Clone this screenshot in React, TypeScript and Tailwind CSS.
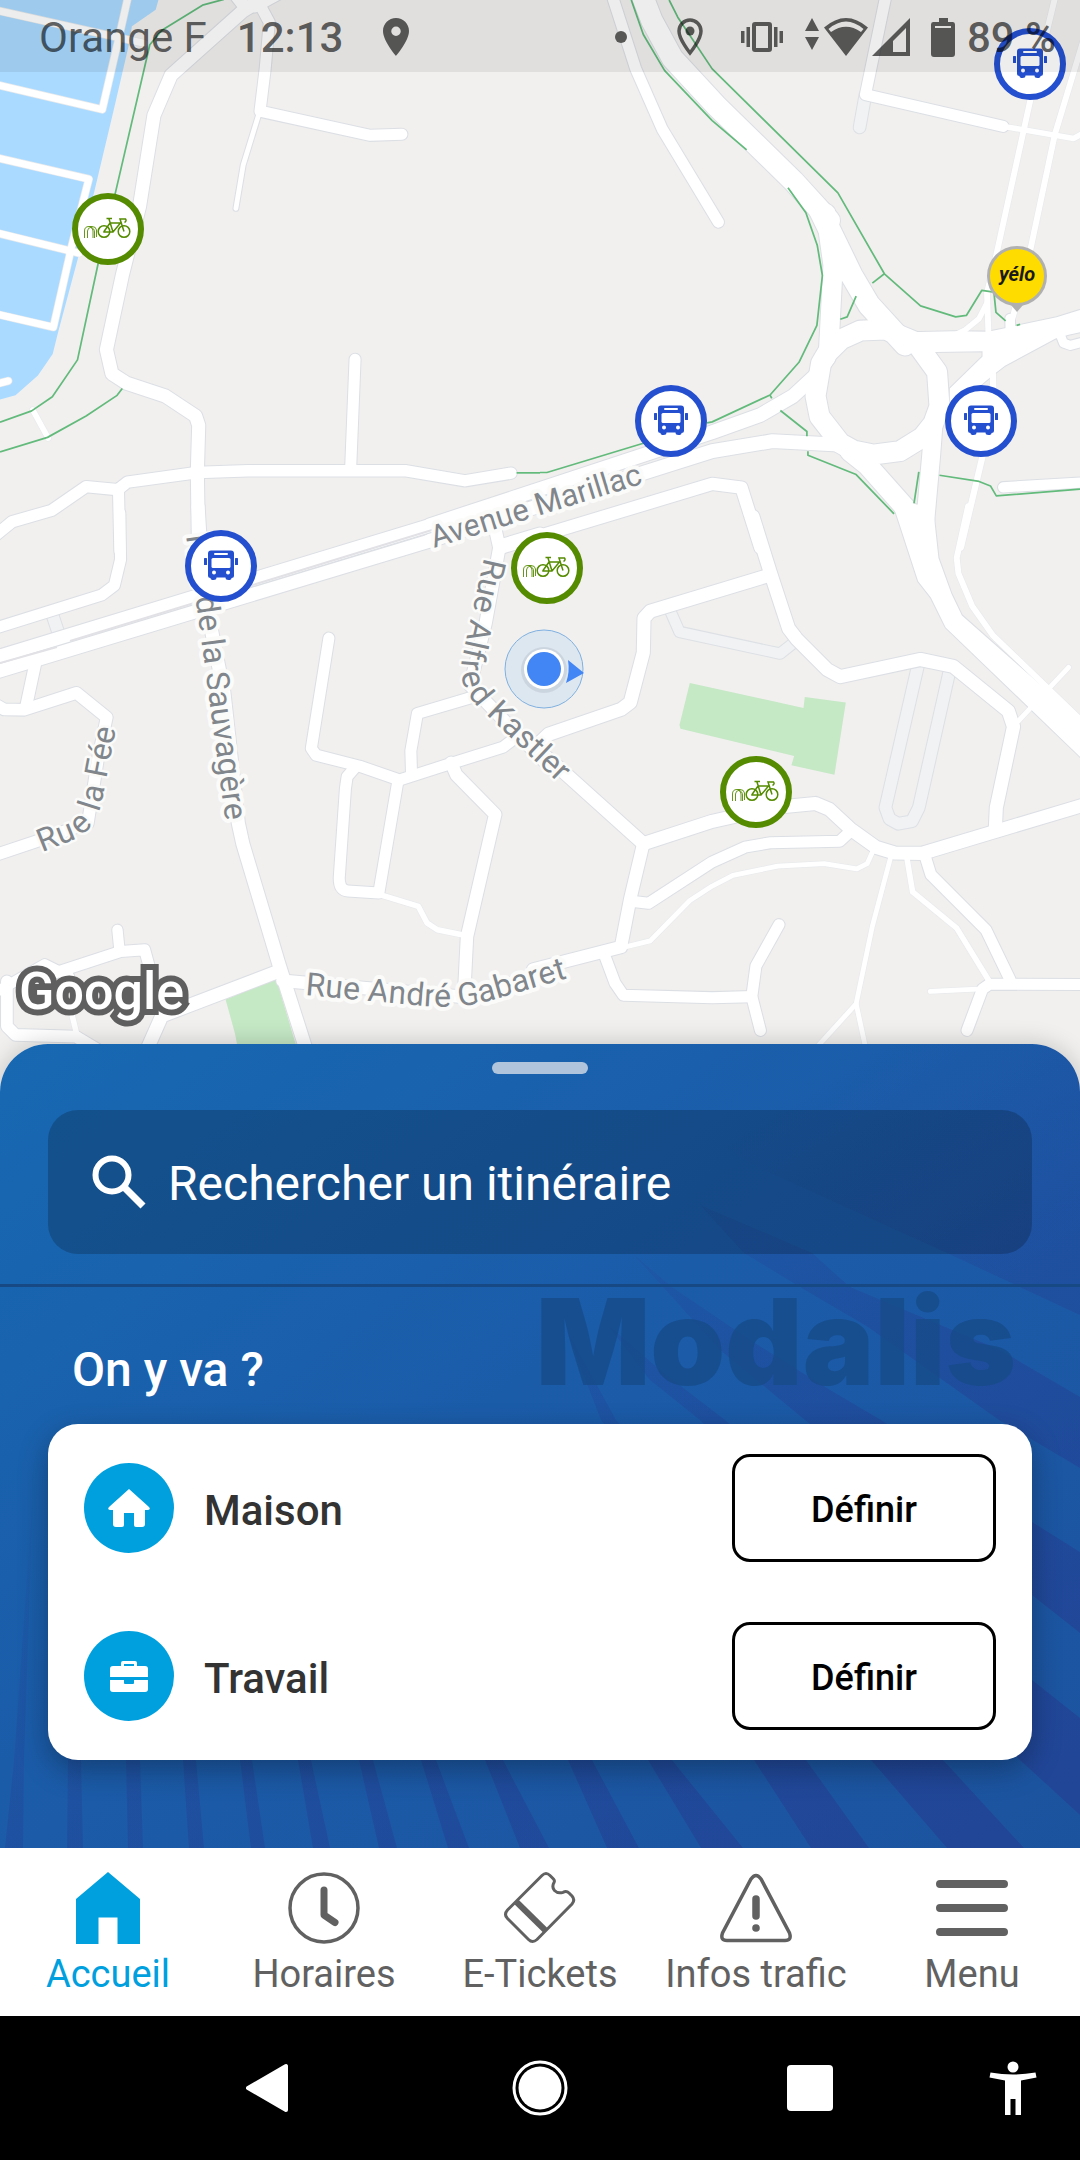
import type { ReactNode } from "react";

type Road = { d: string; w: number };
type Tile = {
  x: number;
  y: number;
  water?: string;
  parks: string[];
  piers: Road[];
  lanes: Road[];
  roads: Road[];
  shapes: string[];
  cycle: string[];
};

/* Each tile covers 540 map units and is described on a 1568-unit grid. */
const TILE_SCALE = 540 / 1568;
const MAP_WIDTH = 1080;
const MAP_HEIGHT = 1092;

const tiles: Tile[] = [
  {
    x: 0,
    y: 0,
    water: "M0 0H460L452 28L383 76L373 135L330 320L273 560L225 755L170 960L153 1028L110 1090L45 1148L0 1160Z",
    parks: [],
    piers: [
      { d: "M-10 30L420 126", w: 20 },
      { d: "M372 -10L345 110L297 318L-10 246", w: 20 },
      { d: "M-10 458L258 520L203 735", w: 20 },
      { d: "M-10 676L230 735", w: 20 },
      { d: "M206 725L155 950L-10 912", w: 20 },
      { d: "M-10 1115L24 1106", w: 20 },
      { d: "M95 1190L140 1272", w: 16 },
    ],
    lanes: [],
    roads: [
      { d: "M752 330L706 480L685 605", w: 14 },
      { d: "M680 -20L715 25", w: 36 },
      { d: "M810 -20L740 18", w: 36 },
      { d: "M750 5L782 65L770 200L755 323L1075 393L1167 390", w: 32 },
      { d: "M745 8L705 32L497 218L447 335L405 600L355 800L309 1015L325 1085L368 1113L480 1150L568 1208L577 1235L573 1370L576 1568", w: 38 },
      { d: "M1031 1043L1018 1365", w: 32 },
      { d: "M1484 1374L1350 1396L1180 1367L720 1367L573 1372L370 1400L342 1422L250 1413L150 1482L35 1515L-20 1560", w: 33 },
      { d: "M344 1422L348 1600", w: 32 },
    ],
    shapes: [],
    cycle: [
      "M650 -2L588 15L470 88L435 130L335 560L285 765L225 1045L152 1152L92 1193L0 1226",
      "M0 1312L138 1270L250 1208L340 1148L355 1128",
      "M1500 1373H1568",
    ],
  },
  {
    x: 540,
    y: 0,
    parks: [],
    piers: [
      { d: "M1345 367L1550 402L1580 385", w: 16 },
      { d: "M1495 -5L1425 285L1325 740L1298 850L1302 965", w: 17 },
      { d: "M1298 880L1275 925L1235 958L1200 975", w: 16 },
      { d: "M1580 110L1495 390L1425 720L1368 940", w: 17 },
      { d: "M1315 1085L1316 1130L1285 1325L1222 1590", w: 18 },
    ],
    lanes: [{ d: "M945 275L928 370", w: 34 }],
    roads: [
      { d: "M212 -5L278 200L355 375L518 645", w: 32 },
      { d: "M1005 -15L945 275L1345 367", w: 32 },
      { d: "M1345 1415L1590 1400", w: 30 },
      { d: "M290 -30L325 60L385 170L510 305L735 525L840 640", w: 62 },
      { d: "M815 615L905 800L955 885L1060 1000", w: 64 },
      { d: "M830 620L851 770L838 1020", w: 56 },
      { d: "M838 1040L800 1090L735 1150L640 1205L500 1255L0 1420L-320 1525", w: 40 },
      { d: "M880 1292L675 1281L500 1310L0 1468L-320 1570", w: 40 },
      { d: "M-110 1589L-20 1562L500 1405L585 1416L640 1590", w: 36 },
      { d: "M930 960L1003 957L1090 993L1153 1080L1160 1180L1142 1230L1110 1270L1045 1310L967 1320L910 1308L872 1287L812 1210L800 1150L816 1055L834 1025L875 985Z", w: 58 },
      { d: "M900 1310L950 1350L1070 1485", w: 58 },
      { d: "M1142 1240L1136 1320L1118 1520", w: 52 },
      { d: "M1365 925L1366 965", w: 28 },
      { d: "M1512 975L1520 996L1540 1003L1580 992", w: 26 },
    ],
    shapes: [
      "M1070 965L1200 962L1300 963L1350 953L1500 921L1590 893V960L1535 972L1497 983L1350 1062L1320 1085L1230 1160L1190 1200V1128L1285 1035V1020L1148 1022L1080 1020Z",
    ],
    cycle: [
      "M265 0L300 100L362 205L500 350L600 435",
      "M720 545L772 618L805 712L820 800L804 945L752 1052L668 1147L500 1225L485 1228",
      "M375 0L400 50L500 200L865 560L1000 795L1105 888L1207 920L1238 916L1283 843L1318 848L1324 907L1352 932",
      "M1000 795L965 822",
      "M918 860L892 920L872 927",
      "M668 1147L673 1157",
      "M698 1192L775 1253V1267",
      "M778 1310V1322L918 1378L1028 1492",
      "M1100 1370L1086 1462",
      "M1160 1380L1275 1398L1308 1411L1325 1440L1568 1420",
      "M300 1287L20 1372H0",
      "M1384 945L1394 942",
    ],
  },
  {
    x: 0,
    y: 520,
    parks: ["M655 1392L802 1332L885 1610H706L682 1490Z"],
    piers: [
      { d: "M1110 1090L1215 1122L1240 1170L1270 1190L1345 1205", w: 16 },
      { d: "M205 1420L222 1490", w: 16 },
    ],
    lanes: [{ d: "M152 275L172 335", w: 34 }],
    roads: [
      { d: "M348 -20L350 115L332 190L295 218L-10 313", w: 32 },
      { d: "M-20 401L1250 15", w: 38 },
      { d: "M-20 444L1250 60", w: 38 },
      { d: "M105 405L75 545", w: 34 },
      { d: "M-20 532L12 550L70 551L222 502L310 573L285 690L255 880L100 935L-20 975", w: 34 },
      { d: "M575 -40L590 200L650 500L692 880L705 940L810 1290L915 1620", w: 38 },
      { d: "M820 1338L900 1345L1350 1385L1600 1310", w: 36 },
      { d: "M955 343L904 663L918 683L1045 715L1160 755L1300 710L1460 660L1500 630", w: 32 },
      { d: "M1195 740L1193 670L1212 562L1370 515", w: 32 },
      { d: "M1030 720L1008 745L1003 780L985 1040Q985 1075 1010 1077L1100 1083L1155 760", w: 32 },
      { d: "M1310 705L1325 740L1438 855L1356 1210L1348 1370", w: 36 },
      { d: "M1430 -10L1450 80L1410 300L1365 480L1500 620L1590 710", w: 36 },
      { d: "M1450 75L1568 40", w: 36 },
      { d: "M341 1190L347 1250", w: 30 },
      { d: "M150 1318L350 1253L420 1248L445 1340L490 1430", w: 32 },
      { d: "M-10 1370L130 1290L200 1325", w: 30 },
      { d: "M20 1340V1470L45 1495L220 1500L320 1560", w: 34 },
      { d: "M390 1620L470 1440L810 1310", w: 38 },
    ],
    shapes: [],
    cycle: [],
  },
  {
    x: 540,
    y: 520,
    parks: ["M435 473L765 546L769 514L888 530L855 740L730 712L738 685L408 606L405 595Z"],
    piers: [
      { d: "M245 1240L320 1222L435 1105L500 1063L560 1032L690 1005L825 998L920 1013L950 998L965 965", w: 14 },
      { d: "M1018 980L965 1180L918 1405L750 1590", w: 14 },
      { d: "M918 1405L960 1600", w: 14 },
      { d: "M1066 985L1082 1080L1210 1185L1305 1340", w: 16 },
      { d: "M1300 1361L1133 1369", w: 14 },
      { d: "M1243 -40L1210 110L1215 155L1255 250L1315 335L1590 600", w: 17 },
      { d: "M1535 428L1388 585", w: 14 },
    ],
    lanes: [
      { d: "M380 268L405 325L697 388L735 358", w: 30 },
      { d: "M1097 425L1003 835L1015 868L1040 882L1080 875L1100 835L1190 435", w: 34 },
    ],
    roads: [
      { d: "M618 -10L668 150L722 315L745 345L835 435L872 455L1105 405L1200 425L1360 555L1375 600L1325 835L1322 900", w: 38 },
      { d: "M668 160L320 265L302 285L300 385L262 530L235 550L25 622L-20 665", w: 38 },
      { d: "M-40 640L50 715L300 940L500 875L680 835L800 823L840 840L905 900L975 950L1030 967L1110 968L1590 824", w: 38 },
      { d: "M300 940L262 1100L235 1240L-20 1305", w: 36 },
      { d: "M265 1107L315 1113L500 993L595 950L670 937L870 933L900 905", w: 32 },
      { d: "M188 1265L218 1345L242 1380L500 1387L615 1384", w: 32 },
      { d: "M694 1175L627 1295L615 1384L640 1482", w: 32 },
      { d: "M1118 975L1135 1030L1295 1190L1365 1335", w: 32 },
      { d: "M1590 1349L1305 1348L1285 1362L1240 1482", w: 32 },
    ],
    shapes: [
      "M1025 -45L1040 0L1098 178L1135 225L1178 312L1600 718V608L1225 277L1195 215L1157 110L1145 0L1140 -45Z",
    ],
    cycle: [],
  },
];

function TileLayer({ render }: { render: (tile: Tile) => ReactNode }) {
  return (
    <>
      {tiles.map((tile) => (
        <g key={`${tile.x}-${tile.y}`} transform={`translate(${tile.x} ${tile.y}) scale(${TILE_SCALE})`}>
          {render(tile)}
        </g>
      ))}
    </>
  );
}

function strokes(list: Road[], color: string, extra: number) {
  return list.map((r) => (
    <path key={r.d} d={r.d} fill="none" stroke={color} strokeWidth={r.w + extra} strokeLinecap="round" strokeLinejoin="round" />
  ));
}

type Street = { id: string; name: string; d: string; size: number; centered?: boolean };
const streets: Street[] = [
  { id: "marillac", name: "Avenue Marillac", d: "M434 548L700 466", size: 31 },
  { id: "gabaret", name: "Rue André Gabaret", d: "M305 995L425 1006Q462 1009 492 1000L660 951", size: 32 },
  { id: "kastler", name: "Rue Alfred Kastler", d: "M495 560L474 655Q467 681 486 699L650 855", size: 32, centered: true },
  { id: "sauvagere", name: "Rue de la Sauvagère", d: "M186 536L198 615L236 900", size: 32 },
  { id: "fee", name: "Rue la Fée", d: "M38 842L68 830Q86 823 91 800L118 660", size: 32, centered: true },
];

function MapDrawing() {
  return (
    <svg viewBox="0 0 1080 1092" className="block w-full" aria-hidden="true">
      <rect width="1080" height="1092" fill="#f1f0ef" />
      <TileLayer
        render={(t) => (
          <>
            {t.water && <path d={t.water} fill="#aadaff" />}
            {t.parks.map((d) => (
              <path key={d} d={d} fill="#c5e8c5" />
            ))}
            {strokes(t.lanes, "#dde0e4", 6)}
            {strokes(t.lanes, "#f0f2f4", 0)}
            {strokes(t.piers, "#e9eaec", 4)}
            {strokes(t.roads, "#dcdfe4", 6)}
            {t.shapes.map((d) => (
              <path key={d} d={d} fill="none" stroke="#dcdfe4" strokeWidth="6" />
            ))}
          </>
        )}
      />
      <TileLayer
        render={(t) => (
          <>
            {strokes(t.piers, "#ffffff", 0)}
            {strokes(t.roads, "#ffffff", 0)}
            {t.shapes.map((d) => (
              <path key={d} d={d} fill="#ffffff" />
            ))}
            {t.cycle.map((d) => (
              <path key={d} d={d} fill="none" stroke="#62ba7b" strokeWidth="5" strokeLinejoin="round" />
            ))}
          </>
        )}
      />
      <path d="M0 663L57 647M70 641L432 530" stroke="#e2e2e6" strokeWidth="2" fill="none" />
      {streets.map((s) => (
        <g key={s.id}>
          <path id={s.id} d={s.d} fill="none" />
          <text
            fontFamily="Roboto, sans-serif"
            fontSize={s.size}
            fill="#80868b"
            stroke="#fbfbfa"
            strokeWidth={s.centered ? 5 : 8}
            strokeLinejoin="round"
            paintOrder="stroke"
            dominantBaseline={s.centered ? "central" : undefined}
          >
            <textPath href={`#${s.id}`}>{s.name}</textPath>
          </text>
        </g>
      ))}
      <text
        x="19"
        y="1009"
        fontFamily="Roboto, sans-serif"
        fontWeight="500"
        fontSize="52"
        fill="#ffffff"
        stroke="#5f5f5f"
        strokeWidth="12"
        paintOrder="stroke"
      >
        Google
      </text>
      <circle cx="544" cy="669" r="39" fill="#dde7f0" stroke="#7fb0e0" strokeWidth="1" />
      <circle cx="544" cy="670" r="23" fill="#c3cdd8" opacity="0.7" />
      <circle cx="544" cy="669" r="20" fill="#ffffff" />
      <circle cx="544" cy="669" r="17" fill="#4285f4" />
      <path d="M568 660L584 673L566 683Q570 672 568 660Z" fill="#4285f4" />
    </svg>
  );
}

function BusIcon() {
  return (
    <svg viewBox="-30 -30 60 60" className="size-full" aria-hidden="true">
      <path d="M-10 -15.5H10Q13 -15.5 13 -12.5V10Q13 12 10.5 12Q10.5 14 7.5 14Q4.5 14 4.5 11.5H-4.5Q-4.5 14 -7.5 14Q-10.5 14 -10.5 12Q-13 12 -13 10V-12.5Q-13 -15.5 -10 -15.5Z" fill="#244fcf" />
      <rect x="-7" y="-13" width="14" height="2" rx="1" fill="#ffffff" />
      <rect x="-9.5" y="-8" width="19" height="10" rx="1.5" fill="#ffffff" />
      <circle cx="-7" cy="6.5" r="2" fill="#ffffff" />
      <circle cx="7" cy="6.5" r="2" fill="#ffffff" />
      <rect x="-17" y="-8" width="3" height="7" rx="0.5" fill="#244fcf" />
      <rect x="14" y="-8" width="3" height="7" rx="0.5" fill="#244fcf" />
    </svg>
  );
}

function BikeIcon() {
  return (
    <svg viewBox="-30 -30 60 60" className="size-full" aria-hidden="true" fill="none" stroke="#558b00" strokeWidth="1.5">
      <path d="M-23.5 9V2Q-23.5 -2.5 -19 -2.5H-16Q-12 -2.5 -11.5 1V8M-20.5 9V2Q-20 -1.5 -17.5 -1.5Q-15 -1 -15 2V9M-18 -2Q-13.5 -1 -13.5 3V9" strokeWidth="0.9" />
      <circle cx="-4" cy="2.5" r="5.8" />
      <circle cx="16" cy="2.5" r="5.8" />
      <path d="M-4 2.5L2 -6H12.5L5 3H-4ZM1 -10L5 3M-1.5 -10.5H4M16 2.5L12 -10H17.5Q19 -8 16.5 -6.5" />
    </svg>
  );
}

type Stop = { kind: "bus" | "bike"; name: string; x: number; y: number };
const stops: Stop[] = [
  { kind: "bus", name: "Arrêt de bus nord-est", x: 1030, y: 64 },
  { kind: "bike", name: "Vélos du port", x: 108, y: 229 },
  { kind: "bus", name: "Arrêt avenue Marillac", x: 671, y: 421 },
  { kind: "bus", name: "Arrêt du rond-point", x: 981, y: 421 },
  { kind: "bus", name: "Arrêt de la Sauvagère", x: 221, y: 566 },
  { kind: "bike", name: "Vélos Alfred Kastler", x: 547, y: 568 },
  { kind: "bike", name: "Vélos du parc", x: 756, y: 792 },
];

function mapPosition(x: number, y: number) {
  return { left: `${(x / MAP_WIDTH) * 100}%`, top: `${(y / MAP_HEIGHT) * 100}%` };
}

function StopMarker({ stop }: { stop: Stop }) {
  const ring = stop.kind === "bus" ? "border-[#244fcf]" : "border-[#558b00]";
  return (
    <button
      type="button"
      aria-label={stop.name}
      className={`absolute size-18 -translate-x-1/2 -translate-y-1/2 rounded-full border-6 bg-white ${ring}`}
      style={mapPosition(stop.x, stop.y)}
    >
      {stop.kind === "bus" ? <BusIcon /> : <BikeIcon />}
    </button>
  );
}

function StatusBar() {
  return (
    <div className="absolute inset-x-0 top-0 flex h-18 items-center bg-black/7 pt-0.5 pr-6 pl-[39px] text-[42px] text-black/62">
      <span>Orange F</span>
      <span className="ml-[30px] font-medium">12:13</span>
      <svg viewBox="0 0 26 38" className="ml-10 h-[38px] w-[26px]" fill="currentColor" aria-hidden="true">
        <path fillRule="evenodd" d="M13 0C5.8 0 0 5.8 0 13C0 23 13 38 13 38S26 23 26 13C26 5.8 20.2 0 13 0ZM13 8.5A4.7 4.7 0 1 1 13 18A4.7 4.7 0 1 1 13 8.5Z" />
      </svg>
      <span className="ml-auto size-3 rounded-full bg-[#575756]" />
      <svg viewBox="0 0 26 38" className="ml-[50px] h-[38px] w-[26px]" aria-hidden="true">
        <path d="M13 2C7 2 2 7 2 13C2 21.5 13 35 13 35S24 21.5 24 13C24 7 19 2 13 2Z" fill="none" stroke="currentColor" strokeWidth="3.5" />
        <circle cx="13" cy="13" r="4.5" fill="currentColor" />
      </svg>
      <svg viewBox="0 0 42 30" className="ml-[38px] h-[30px] w-[42px]" fill="currentColor" aria-hidden="true">
        <path fillRule="evenodd" d="M14 0H28Q31 0 31 3V27Q31 30 28 30H14Q11 30 11 27V3Q11 0 14 0ZM15 4V26H27V4Z" />
        <path d="M0 9H3.5V21H0ZM5.5 5H9V25H5.5ZM33 5H36.5V25H33ZM38.5 9H42V21H38.5Z" />
      </svg>
      <svg viewBox="0 0 14 32" className="mr-[5px] mb-[6px] ml-[22px] h-8 w-3.5" fill="currentColor" aria-hidden="true">
        <path d="M7 0L14 13H0ZM7 32L14 19H0Z" />
      </svg>
      <svg viewBox="0 0 44 38" className="h-[38px] w-11" fill="currentColor" aria-hidden="true">
        <path fillRule="evenodd" d="M0 9.5Q22 -9.5 44 9.5L22 38ZM4.5 11L7 14Q22 3.5 37 14L39.5 11Q22 -4 4.5 11Z" />
      </svg>
      <svg viewBox="0 0 38 38" className="ml-1 size-[38px]" fill="currentColor" aria-hidden="true">
        <path fillRule="evenodd" d="M38 0V38H0ZM34 10L21 23V34H34Z" />
      </svg>
      <svg viewBox="0 0 24 39" className="ml-[21px] h-[39px] w-6" fill="currentColor" aria-hidden="true">
        <path fillRule="evenodd" d="M8 0H17V4H22Q24 4 24 6.5V36Q24 39 21 39H3Q0 39 0 36V6.5Q0 4 2 4H8ZM4 8V10H20V8Z" />
      </svg>
      <span className="ml-3 font-medium">89 %</span>
    </div>
  );
}

function MapArea() {
  return (
    <section aria-label="Carte" className="relative">
      <MapDrawing />
      <div className="absolute -translate-x-1/2 -translate-y-1/2" style={mapPosition(1017, 279)}>
        <button type="button" className="flex flex-col items-center">
          <span className="flex size-15 items-center justify-center rounded-full border-3 border-[#b0b0b0] bg-[#ffdc00] pb-1 text-xl leading-none font-bold text-[#1a1a1a] italic">
            yélo
          </span>
          <svg viewBox="0 0 12 7" className="-mt-px h-[7px] w-3" aria-hidden="true">
            <path d="M0 0H12L6 7Z" fill="#b0b0b0" />
          </svg>
        </button>
      </div>
      {stops.map((s) => (
        <StopMarker key={s.name} stop={s} />
      ))}
      <StatusBar />
    </section>
  );
}

const rays = [
  "550,0 757,123 947,209 1080,271 1080,0",
  "700,161 812,209 850,243 1000,306 1080,353 1080,424 999,376 868,283 800,243 744,209",
  "634,211 672,243 750,296 830,346 881,376 1032,478 1080,508 1080,589 1032,551 805,376 720,306",
  "606,279 660,326 725,376 1032,636 1080,674 1080,771 1020,716 700,376 650,336",
  "565,283 616,376 943,716 1024,804 947,804 871,716 601,376",
  "530,380 806,716 869,804 811,804 754,716",
  "480,380 672,716 743,804 701,804 648,716",
  "430,380 592,716 639,804 607,804 568,716",
  "390,380 503,716 549,804 520,804 485,716",
  "340,380 436,716 469,804 448,804 421,716",
  "290,380 373,716 397,804 379,804 359,716",
  "245,380 311,716 330,804 313,804 298,716",
  "200,380 252,716 265,804 251,804 240,716",
  "160,380 196,716 204,804 189,804 183,716",
  "115,380 140,716 143,804 128,804 126,716",
  "75,380 81,716 83,804 67,804 68,716",
  "33,450 24,716 23,804 5,804 14,716",
];

function RayBackdrop() {
  return (
    <svg viewBox="0 0 1080 804" preserveAspectRatio="none" className="absolute inset-0 size-full" aria-hidden="true">
      <defs>
        <linearGradient id="ray" gradientUnits="userSpaceOnUse" x1="560" y1="200" x2="900" y2="760">
          <stop offset="0" stopColor="#26388f" stopOpacity="0.08" />
          <stop offset="0.4" stopColor="#26388f" stopOpacity="0.32" />
          <stop offset="1" stopColor="#26388f" stopOpacity="0.5" />
        </linearGradient>
        <linearGradient id="rayTop" gradientUnits="userSpaceOnUse" x1="850" y1="20" x2="1000" y2="260">
          <stop offset="0" stopColor="#26388f" stopOpacity="0" />
          <stop offset="1" stopColor="#26388f" stopOpacity="0.28" />
        </linearGradient>
      </defs>
      {rays.map((points, i) => (
        <polygon key={points} points={points} fill={i === 0 ? "url(#rayTop)" : "url(#ray)"} />
      ))}
    </svg>
  );
}

function HomeGlyph() {
  return (
    <svg viewBox="0 0 90 90" className="size-full" aria-hidden="true">
      <path d="M45 26L65 44Q67 46.5 64 47H61V61Q61 64 58 64H52Q50 64 50 62V50H40V62Q40 64 38 64H32Q29 64 29 61V47H26Q23 46.5 25 44Z" fill="#ffffff" />
    </svg>
  );
}

function CaseGlyph() {
  return (
    <svg viewBox="0 0 90 90" className="size-full" aria-hidden="true">
      <path fillRule="evenodd" d="M39 30H51Q53 30 53 32V35H61Q64 35 64 38V46H26V38Q26 35 29 35H37V32Q37 30 39 30ZM40 33V35H50V33Z" fill="#ffffff" />
      <path d="M26 49H40V52Q40 53 41 53H49Q50 53 50 52V49H64V58Q64 61 61 61H29Q26 61 26 58Z" fill="#ffffff" />
    </svg>
  );
}

function PlaceRow({ icon, name }: { icon: ReactNode; name: string }) {
  return (
    <li className="flex h-42 items-center px-9">
      <span className="size-[90px] shrink-0 rounded-full bg-[#00a0df]">{icon}</span>
      <span className="ml-[30px] pt-1 text-[42px] font-medium text-[#333333]">{name}</span>
      <button
        type="button"
        aria-label={`Définir ${name}`}
        className="ml-auto h-27 w-66 rounded-[18px] border-3 border-black pt-1 text-4xl font-medium text-black"
      >
        Définir
      </button>
    </li>
  );
}

function Sheet() {
  return (
    <main className="relative -mt-12 flex flex-1 flex-col overflow-hidden rounded-t-[48px] bg-linear-to-br from-[#1768b2] via-[#1b5ca9] via-45% to-[#1c539f] shadow-[0_0_24px_rgba(0,0,0,0.2)]">
      <RayBackdrop />
      <div className="relative border-b-3 border-[#174a84] px-12 pt-[18px] pb-[30px]">
        <div className="mx-auto h-3 w-24 rounded-full bg-[#b0c4dc]" />
        <label className="mt-9 flex h-36 items-center rounded-[30px] bg-black/20 px-11">
          <svg viewBox="0 0 54 54" className="size-[54px] shrink-0" fill="none" stroke="#ffffff" aria-hidden="true">
            <circle cx="20" cy="20" r="16.5" strokeWidth="6" />
            <path d="M32 32L51 51" strokeWidth="7" />
          </svg>
          <input
            type="text"
            aria-label="Rechercher un itinéraire"
            placeholder="Rechercher un itinéraire"
            className="ml-[22px] min-w-0 flex-1 bg-transparent pt-0.5 text-5xl text-white outline-none placeholder:text-white placeholder:opacity-100"
          />
        </label>
      </div>
      <div className="relative flex h-[137px] items-end justify-between pr-16 pl-18">
        <h1 className="mb-[26px] text-5xl leading-14 font-medium text-white">On y va ?</h1>
        <span aria-hidden="true" className="mb-[36px] font-['Inter'] text-[120px] leading-[92px] font-black text-[#174b88]/80">
          Modalis
        </span>
      </div>
      <ul className="relative mx-12 rounded-[30px] bg-white shadow-[0_10px_30px_rgba(0,0,0,0.3)]">
        <PlaceRow icon={<HomeGlyph />} name="Maison" />
        <PlaceRow icon={<CaseGlyph />} name="Travail" />
      </ul>
    </main>
  );
}

const tabs: { label: string; icon: ReactNode }[] = [
  {
    label: "Accueil",
    icon: <path d="M36 0L68 27V72H45.5V45.5H26.5V72H4V27Z" fill="currentColor" />,
  },
  {
    label: "Horaires",
    icon: (
      <>
        <circle cx="36" cy="36" r="34" strokeWidth="3.5" />
        <path d="M36 18V43L47 50.5" strokeWidth="7" strokeLinecap="round" strokeLinejoin="round" />
      </>
    ),
  },
  {
    label: "E-Tickets",
    icon: (
      <>
        <path d="M38 3.5Q42 -0.5 46 3.5L49.5 7Q51 8.5 50 10.5Q47.5 15 50.5 18.5Q54 22 59 20.3Q62.5 18.5 65 21L68 24Q71.5 28 68 32L33 67.5Q28.5 71.5 24.5 67.5L3.5 46.5Q-0.5 42.5 3.5 38Z" strokeWidth="3" />
        <path d="M12.5 30L41.5 58.5" strokeWidth="6" />
      </>
    ),
  },
  {
    label: "Infos trafic",
    icon: (
      <>
        <path d="M31 7Q36 0 41 7L69.5 61Q72 68.5 65 68.5H7Q0 68.5 2.5 61Z" strokeWidth="3.5" />
        <path d="M36 27V44" strokeWidth="7.5" strokeLinecap="round" />
        <circle cx="36" cy="56" r="3.8" fill="currentColor" stroke="none" />
      </>
    ),
  },
  {
    label: "Menu",
    icon: <path d="M4 12H68M4 36H68M4 60H68" strokeWidth="8" strokeLinecap="round" />,
  },
];

function TabBar() {
  return (
    <nav className="relative grid h-42 grid-cols-5 bg-white pt-6">
      {tabs.map((tab, i) => (
        <a
          key={tab.label}
          href="#"
          aria-current={i === 0 ? "page" : undefined}
          className={`flex flex-col items-center ${i === 0 ? "text-[#00a0df]" : "text-[#616161]"}`}
        >
          <svg
            viewBox="0 0 72 72"
            className="size-18 overflow-visible"
            fill="none"
            stroke={i === 0 ? "none" : "currentColor"}
            aria-hidden="true"
          >
            {tab.icon}
          </svg>
          <span className="mt-2 text-[38px] leading-11 whitespace-nowrap">{tab.label}</span>
        </a>
      ))}
    </nav>
  );
}

function SystemBar() {
  return (
    <footer className="grid h-36 grid-cols-8 place-items-center bg-black">
      <button type="button" aria-label="Retour" className="col-span-2 col-start-2">
        <svg viewBox="0 0 48 50" className="h-[50px] w-12" aria-hidden="true">
          <path d="M2 25L40 3V47Z" fill="#ffffff" stroke="#ffffff" strokeWidth="4" strokeLinejoin="round" />
        </svg>
      </button>
      <button type="button" aria-label="Accueil du téléphone" className="col-span-2">
        <svg viewBox="0 0 56 56" className="size-14" aria-hidden="true">
          <circle cx="28" cy="28" r="26" fill="none" stroke="#ffffff" strokeWidth="3" />
          <circle cx="28" cy="28" r="21.5" fill="#ffffff" />
        </svg>
      </button>
      <button type="button" aria-label="Applications récentes" className="col-span-2 size-[46px] rounded-sm bg-white" />
      <button type="button" aria-label="Accessibilité">
        <svg viewBox="0 0 48 54" className="h-[54px] w-12" fill="#ffffff" aria-hidden="true">
          <circle cx="24" cy="6" r="5.5" />
          <path d="M1.5 11.5Q24 15.5 46.5 11.5L47.5 16.5L32 19.5V54H26.5V38H21.5V54H16V19.5L0.5 16.5Z" />
        </svg>
      </button>
    </footer>
  );
}

export default function App() {
  return (
    <div className="flex min-h-screen flex-col bg-black font-['Roboto',sans-serif]">
      <MapArea />
      <Sheet />
      <TabBar />
      <SystemBar />
    </div>
  );
}
